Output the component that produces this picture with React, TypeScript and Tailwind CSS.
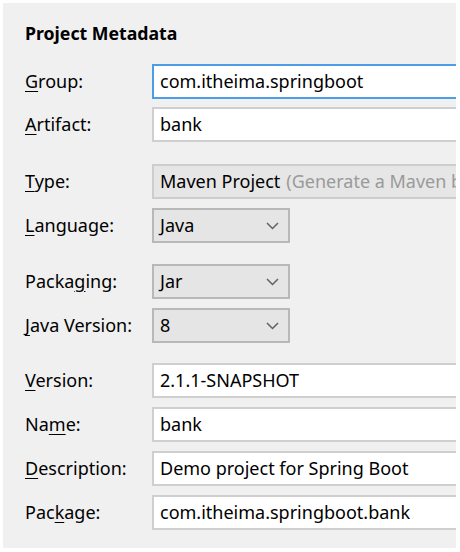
import React from "react";

const Chevron = () => (
  <svg width="13" height="8" viewBox="0 0 13 8" className="shrink-0">
    <polyline points="1,1 6.5,6.5 12,1" fill="none" stroke="#606060" strokeWidth="1.5" />
  </svg>
);

const Label = ({ pre, u, post }: { pre: string; u: string; post: string }) => (
  <div className="w-[127px] shrink-0 text-[18px] text-black whitespace-nowrap">
    {pre}
    <span className="underline underline-offset-[3px] decoration-1">{u}</span>
    {post}
  </div>
);

const Row = ({ children, mt }: { children: React.ReactNode; mt: string }) => (
  <div className={`flex items-center h-[35px] ${mt}`}>{children}</div>
);

const TextBox = ({ value, focused }: { value: string; focused?: boolean }) => (
  <div
    className={`h-[35px] w-[340px] shrink-0 bg-white border-2 flex items-center pl-[6px] text-[18px] text-black whitespace-nowrap ${
      focused ? "border-[#4a9de6]" : "border-[#cfcfcf]"
    }`}
  >
    {value}
  </div>
);

const Combo = ({ value }: { value: string }) => (
  <div className="h-[35px] w-[138px] shrink-0 bg-[#e5e5e5] border-2 border-[#b8b8b8] flex items-center justify-between pl-[6px] pr-[9px] text-[18px] text-black">
    <span>{value}</span>
    <Chevron />
  </div>
);

export default function App() {
  return (
    <div className="w-[460px] h-[552px] bg-white p-[3px] font-['Noto_Sans',sans-serif]">
      <div className="w-[453px] h-[545px] bg-[#f0f0f0] overflow-hidden pl-[22px] pt-[18px]">
        <div className="text-[17.7px] font-bold text-black leading-[24px] h-[24px]">Project Metadata</div>
        <div className="mt-[19px]">
          <Row mt="mt-0">
            <Label pre="" u="G" post="roup:" />
            <TextBox value="com.itheima.springboot" focused />
          </Row>
          <Row mt="mt-[8px]">
            <Label pre="" u="A" post="rtifact:" />
            <TextBox value="bank" />
          </Row>
          <Row mt="mt-[22px]">
            <Label pre="" u="T" post="ype:" />
            <div className="h-[35px] w-[340px] shrink-0 bg-[#e6e6e6] border-2 border-[#cdcdcd] flex items-center pl-[6px] text-[18px] whitespace-nowrap overflow-hidden">
              <span className="text-black">Maven Project</span>
              <span className="text-[#9a9a9a] ml-[6px]">(Generate a Maven based project)</span>
            </div>
          </Row>
          <Row mt="mt-[9px]">
            <Label pre="" u="L" post="anguage:" />
            <Combo value="Java" />
          </Row>
          <Row mt="mt-[21px]">
            <Label pre="Packa" u="g" post="ing:" />
            <Combo value="Jar" />
          </Row>
          <Row mt="mt-[9px]">
            <Label pre="" u="J" post="ava Version:" />
            <Combo value="8" />
          </Row>
          <Row mt="mt-[20px]">
            <Label pre="" u="V" post="ersion:" />
            <TextBox value="2.1.1-SNAPSHOT" />
          </Row>
          <Row mt="mt-[9px]">
            <Label pre="Na" u="m" post="e:" />
            <TextBox value="bank" />
          </Row>
          <Row mt="mt-[9px]">
            <Label pre="" u="D" post="escription:" />
            <TextBox value="Demo project for Spring Boot" />
          </Row>
          <Row mt="mt-[9px]">
            <Label pre="Pac" u="k" post="age:" />
            <TextBox value="com.itheima.springboot.bank" />
          </Row>
        </div>
      </div>
    </div>
  );
}
